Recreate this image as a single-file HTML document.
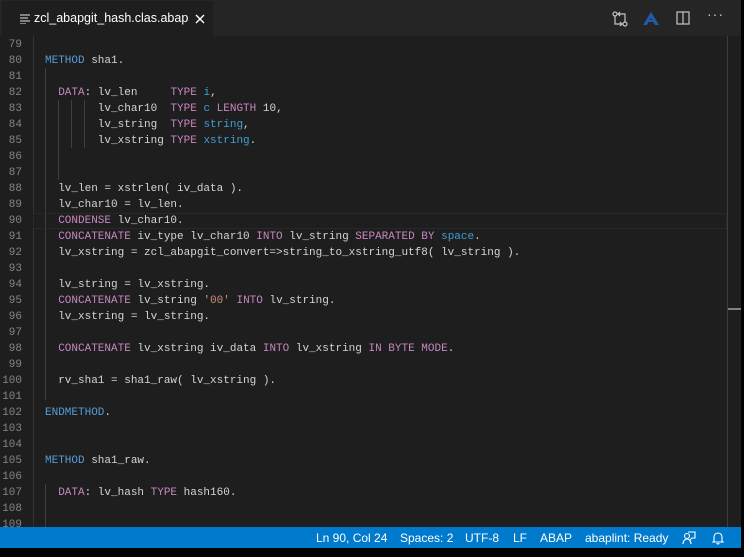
<!DOCTYPE html>
<html><head><meta charset="utf-8"><style>
body{margin:0;width:744px;height:557px;background:#000;overflow:hidden;position:relative;font-family:"Liberation Sans",sans-serif}
#top{position:absolute;left:0;top:0;width:741px;height:36px;background:#252526}
#tab{position:absolute;left:2px;top:1px;width:211px;height:35px;background:#1e1e1e;color:#fff;font-size:12.5px}
#ed{position:absolute;left:0;top:36px;width:741px;height:491px;background:#1e1e1e;overflow:hidden}
.l{position:absolute;left:0;height:16px;width:727px;font-family:"Liberation Mono",monospace;font-size:11px;line-height:16px;color:#d4d4d4;white-space:pre}
.n{position:absolute;left:0;width:22px;text-align:right;color:#858585}
.c{position:absolute;left:45px}
.k{color:#569cd6}.p{color:#c586c0}.t{color:#3e9fd6}.s{color:#ce9178}
.g{position:absolute;width:1px;background:#404040}
#sb{position:absolute;left:0;top:527px;width:741px;height:21px;background:#007acc;color:#fff;font-size:12px;line-height:23px}
#sb span{position:absolute;top:0}
</style></head><body>
<div id="top">
<div id="tab">
<svg style="position:absolute;left:18px;top:13px" width="10" height="10"><g stroke="#c5c5c5" stroke-width="1.2"><line x1="0" y1="1" x2="10" y2="1"/><line x1="0" y1="4" x2="8" y2="4"/><line x1="0" y1="7" x2="10" y2="7"/><line x1="0" y1="10" x2="6" y2="10"/></g></svg>
<span style="position:absolute;left:32px;top:10px">zcl_abapgit_hash.clas.abap</span>
<svg style="position:absolute;left:193px;top:13px" width="10" height="10"><path d="M1 1L9 9M9 1L1 9" stroke="#fff" stroke-width="1.4"/></svg>
</div>
<svg style="position:absolute;left:612px;top:11px" width="16" height="16" fill="none" stroke="#c5c5c5" stroke-width="1.2"><circle cx="3" cy="3" r="2"/><circle cx="13" cy="13" r="2"/><path d="M3 5V13h7M13 11V3H6M8 1L6 3l2 2M8 11l2 2-2 2"/></svg>
<svg style="position:absolute;left:643px;top:12px" width="16" height="13"><path d="M8 0L16 13H12L8 6 4 13H0Z" fill="#2458a8"/><rect x="6" y="8" width="4" height="2" fill="#2458a8"/></svg>
<svg style="position:absolute;left:676px;top:11px" width="14" height="14" fill="none" stroke="#c5c5c5" stroke-width="1.2"><rect x="1" y="1" width="12" height="12"/><line x1="7" y1="1" x2="7" y2="13"/></svg>
<span style="position:absolute;left:707px;top:6px;color:#c5c5c5;font-size:14px;letter-spacing:1px">···</span>
</div>
<div id="ed">
<div class="g" style="left:33px;top:0;height:491px;background:#333"></div>
<div class="g" style="left:45px;top:32px;height:332px"></div>
<div class="g" style="left:58px;top:64px;height:48px"></div>
<div class="g" style="left:71px;top:64px;height:48px"></div>
<div class="g" style="left:84px;top:64px;height:48px"></div>
<div class="g" style="left:58px;top:112px;height:32px"></div>
<div class="g" style="left:45px;top:448px;height:43px"></div>
<div style="position:absolute;left:33px;top:177px;width:692px;height:14px;border:1px solid #282828"></div>
<div class="g" style="left:727px;top:0;height:491px;background:#3c3c3c"></div>
<div style="position:absolute;left:728px;top:272px;width:13px;height:2px;background:#7a8480"></div>
</div>
<div id="lines" style="position:absolute;left:0;top:37px">
<div class="l" style="top:0"><span class="n">79</span></div>
<div class="l" style="top:16px"><span class="n">80</span><span class="c"><span class="k">METHOD</span> sha1.</span></div>
<div class="l" style="top:32px"><span class="n">81</span></div>
<div class="l" style="top:48px"><span class="n">82</span><span class="c">  <span class="p">DATA</span>: lv_len     <span class="p">TYPE</span> <span class="t">i</span>,</span></div>
<div class="l" style="top:64px"><span class="n">83</span><span class="c">        lv_char10  <span class="p">TYPE</span> <span class="t">c</span> <span class="p">LENGTH</span> 10,</span></div>
<div class="l" style="top:80px"><span class="n">84</span><span class="c">        lv_string  <span class="p">TYPE</span> <span class="t">string</span>,</span></div>
<div class="l" style="top:96px"><span class="n">85</span><span class="c">        lv_xstring <span class="p">TYPE</span> <span class="t">xstring</span>.</span></div>
<div class="l" style="top:112px"><span class="n">86</span></div>
<div class="l" style="top:128px"><span class="n">87</span></div>
<div class="l" style="top:144px"><span class="n">88</span><span class="c">  lv_len = xstrlen( iv_data ).</span></div>
<div class="l" style="top:160px"><span class="n">89</span><span class="c">  lv_char10 = lv_len.</span></div>
<div class="l" style="top:176px"><span class="n">90</span><span class="c">  <span class="p">CONDENSE</span> lv_char10.</span></div>
<div class="l" style="top:192px"><span class="n">91</span><span class="c">  <span class="p">CONCATENATE</span> iv_type lv_char10 <span class="p">INTO</span> lv_string <span class="p">SEPARATED BY</span> <span class="t">space</span>.</span></div>
<div class="l" style="top:208px"><span class="n">92</span><span class="c">  lv_xstring = zcl_abapgit_convert=&gt;string_to_xstring_utf8( lv_string ).</span></div>
<div class="l" style="top:224px"><span class="n">93</span></div>
<div class="l" style="top:240px"><span class="n">94</span><span class="c">  lv_string = lv_xstring.</span></div>
<div class="l" style="top:256px"><span class="n">95</span><span class="c">  <span class="p">CONCATENATE</span> lv_string <span class="s">'00'</span> <span class="p">INTO</span> lv_string.</span></div>
<div class="l" style="top:272px"><span class="n">96</span><span class="c">  lv_xstring = lv_string.</span></div>
<div class="l" style="top:288px"><span class="n">97</span></div>
<div class="l" style="top:304px"><span class="n">98</span><span class="c">  <span class="p">CONCATENATE</span> lv_xstring iv_data <span class="p">INTO</span> lv_xstring <span class="p">IN BYTE MODE</span>.</span></div>
<div class="l" style="top:320px"><span class="n">99</span></div>
<div class="l" style="top:336px"><span class="n">100</span><span class="c">  rv_sha1 = sha1_raw( lv_xstring ).</span></div>
<div class="l" style="top:352px"><span class="n">101</span></div>
<div class="l" style="top:368px"><span class="n">102</span><span class="c"><span class="k">ENDMETHOD</span>.</span></div>
<div class="l" style="top:384px"><span class="n">103</span></div>
<div class="l" style="top:400px"><span class="n">104</span></div>
<div class="l" style="top:416px"><span class="n">105</span><span class="c"><span class="k">METHOD</span> sha1_raw.</span></div>
<div class="l" style="top:432px"><span class="n">106</span></div>
<div class="l" style="top:448px"><span class="n">107</span><span class="c">  <span class="p">DATA</span>: lv_hash <span class="p">TYPE</span> hash160.</span></div>
<div class="l" style="top:464px"><span class="n">108</span></div>
<div class="l" style="top:480px;height:10px;overflow:hidden"><span class="n">109</span></div>
</div>
<div id="sb">
<span style="left:316px">Ln 90, Col 24</span>
<span style="left:400px">Spaces: 2</span>
<span style="left:465px">UTF-8</span>
<span style="left:513px">LF</span>
<span style="left:540px">ABAP</span>
<span style="left:585px">abaplint: Ready</span>
<svg style="position:absolute;left:682px;top:4px" width="14" height="14" fill="none" stroke="#fff" stroke-width="1.1"><circle cx="5" cy="5" r="2.5"/><path d="M1 13c0-3 2-5 4-5s4 2 4 5M6 1h7v6h-3l-2 2"/></svg>
<svg style="position:absolute;left:712px;top:4px" width="12" height="14" fill="none" stroke="#fff" stroke-width="1.1"><path d="M2 10V6a4 4 0 0 1 8 0v4l1 1H1zM5 12a1 1 0 0 0 2 0"/></svg>
</div>
</body></html>
